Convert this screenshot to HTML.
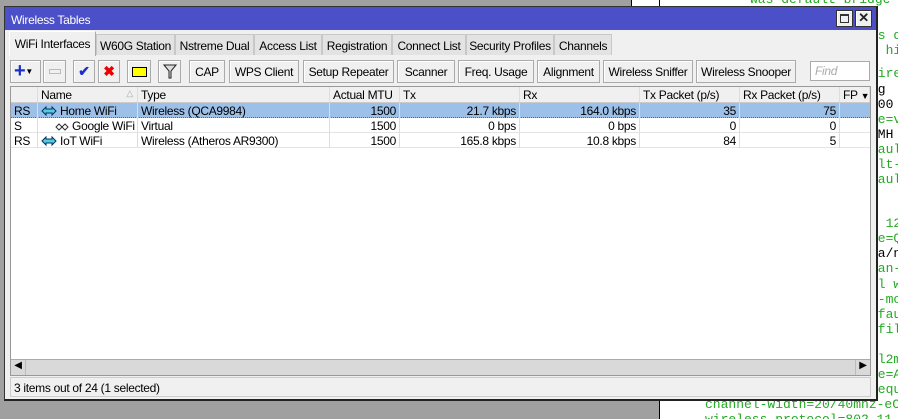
<!DOCTYPE html><html><head><style>
*{box-sizing:border-box;margin:0;padding:0}
html,body{overflow:hidden}
body{width:898px;height:419px;background:#a0a0a0;font-family:"Liberation Sans",sans-serif;font-size:12px;letter-spacing:-0.3px;color:#000;position:relative}
.term{position:absolute;left:659px;top:0;width:239px;height:419px;overflow:hidden;background:#fff;border-left:1px solid #000;font-family:"Liberation Mono",monospace;font-size:13px;letter-spacing:0;color:#2a2;white-space:pre;line-height:15px}
.termtop{position:absolute;left:631px;top:0;width:40px;height:8px;background:#fff;border-left:1px solid #000}
.term div{position:absolute;left:0}
.win{position:absolute;left:4px;top:6px;width:874px;height:395px;background:#f0f0f0;border:1px solid #333;border-right:2px solid #222;border-bottom:2px solid #222}
.title{position:absolute;left:0;top:0;right:0;height:23px;background:#4b4fc8;color:#fff;font-size:12px;padding:6px 0 0 6px}
.tb{position:absolute;top:3px;width:17px;height:17px;background:#f0f0f0;border:1px solid #333;box-shadow:inset 1px 1px #fff}
.tab{position:absolute;top:27px;height:21px;background:#e3e3e3;border:1px solid #c8c8c8;border-bottom:none;text-align:center;padding-top:4px;white-space:nowrap;overflow:hidden}
.tab.a{top:24px;height:25px;background:#f0f0f0;border-color:#fff #aaa #aaa #fff;padding-top:5px}
.btn{position:absolute;top:53px;height:23px;background:#f0f0f0;border:1px solid #aaa;text-align:center;padding-top:4px;box-shadow:inset 1px 1px #fff;white-space:nowrap;overflow:hidden}
.find{position:absolute;left:805px;top:54px;width:60px;height:20px;background:#fff;border:1px solid #aaa;color:#aaa;font-style:italic;padding:2px 4px}
.list{position:absolute;left:5px;top:79px;width:861px;height:290px;background:#fff;border:1px solid #999}
.hdr{position:absolute;left:0;top:0;height:16px;width:859px;background:#f0f0f0;border-bottom:1px solid #ccc}
.c{position:absolute;height:15px;padding:1px 3px 0;white-space:nowrap;overflow:hidden;border-right:1px solid #ddd}
.r{text-align:right}
.row{position:absolute;left:0;width:859px;height:15px;border-bottom:1px solid #e4e4e4}
.sel{background:#9cc0e8;border-bottom:1px dotted #666}
.hs{position:absolute;left:0;bottom:0;width:859px;height:16px;background:#d9d9d9;border-top:1px solid #aaa}
.status{position:absolute;left:5px;top:370px;width:861px;height:20px;border:1px solid #ccc;padding:3px 3px}
svg{vertical-align:-2px}
</style></head><body>
<div class="termtop"></div>
<div class="term">
<div style="top:-8px;left:90px">was-default-bridge none was</div>
<div style="top:28px;left:210px">es d</div>
<div style="top:43px;left:210px">  hi</div>
<div style="top:66px;left:210px">wire</div>
<div style="top:82px;left:210px;color:#000">ag</div>
<div style="top:97px;left:210px;color:#000">500</div>
<div style="top:112px;left:210px">pe=v</div>
<div style="top:127px;left:210px;color:#000">LMH</div>
<div style="top:142px;left:210px">faul</div>
<div style="top:157px;left:210px">ult-</div>
<div style="top:172px;left:210px">faul</div>
<div style="top:216px;left:210px">0 12</div>
<div style="top:231px;left:210px">pe=Q</div>
<div style="top:246px;left:210px;color:#000">-a/n</div>
<div style="top:261px;left:210px">can-</div>
<div style="top:277px;left:210px">el w</div>
<div style="top:292px;left:210px">e-mo</div>
<div style="top:307px;left:210px">efau</div>
<div style="top:322px;left:210px">ofil</div>
<div style="top:352px;left:210px"> l2m</div>
<div style="top:367px;left:210px">pe=A</div>
<div style="top:382px;left:210px">requ</div>
<div style="top:397px;left:45px">channel-width=20/40mhz-eC se</div>
<div style="top:412px;left:45px">wireless-protocol=802.11 vla</div>
</div>
<div class="win">
<div class="title">Wireless Tables
<div class="tb" style="right:23px"><div style="position:absolute;left:3px;top:3px;width:9px;height:9px;border:1px solid #333;border-top-width:2px"></div></div>
<div class="tb" style="right:4px;color:#222;font-weight:bold;font-size:13px;line-height:14px;text-align:center">✕</div>
</div>
<div class="tab a" style="left:4px;width:87px">WiFi Interfaces</div>
<div class="tab" style="left:91px;width:79px">W60G Station</div>
<div class="tab" style="left:170px;width:79px">Nstreme Dual</div>
<div class="tab" style="left:249px;width:68px">Access List</div>
<div class="tab" style="left:317px;width:70px">Registration</div>
<div class="tab" style="left:387px;width:74px">Connect List</div>
<div class="tab" style="left:461px;width:88px">Security Profiles</div>
<div class="tab" style="left:549px;width:58px">Channels</div>
<div class="btn" style="left:5px;width:31px;padding-top:1px;text-align:left;padding-left:3px"><span style="color:#1a2fd0;font-size:20px;font-weight:bold;line-height:18px">+</span><span style="font-size:8px;vertical-align:3px">▼</span></div>
<div class="btn" style="left:38px;width:23px"><div style="margin:4px auto;width:12px;height:5px;border:1px solid #bbb"></div></div>
<div class="btn" style="left:68px;width:22px;color:#1a2fd0;font-weight:bold;padding-top:2px;font-size:14px">✔</div>
<div class="btn" style="left:93px;width:22px;color:#e00;font-weight:bold;padding-top:2px;font-size:14px">✖</div>
<div class="btn" style="left:122px;width:24px"><div style="margin:2px auto;width:15px;height:10px;background:#ff0;border:1px solid #000"></div></div>
<div class="btn" style="left:153px;width:23px;padding-top:1px"><svg width="14" height="18" viewBox="0 0 14 18"><path d="M1 3h12l-5 6v7h-2v-7z" fill="#ddd" stroke="#222"/></svg></div>
<div class="btn" style="left:184px;width:36px">CAP</div>
<div class="btn" style="left:224px;width:70px">WPS Client</div>
<div class="btn" style="left:298px;width:91px">Setup Repeater</div>
<div class="btn" style="left:392px;width:58px">Scanner</div>
<div class="btn" style="left:453px;width:76px">Freq. Usage</div>
<div class="btn" style="left:532px;width:63px">Alignment</div>
<div class="btn" style="left:598px;width:90px">Wireless Sniffer</div>
<div class="btn" style="left:691px;width:100px">Wireless Snooper</div>
<div class="find">Find</div>
<div class="list">
<div class="hdr">
<div class="c" style="left:0;width:27px"></div>
<div class="c" style="left:27px;width:100px">Name<span style="position:absolute;right:4px;color:#aaa;font-size:9px">△</span></div>
<div class="c" style="left:127px;width:192px">Type</div>
<div class="c" style="left:319px;width:70px">Actual MTU</div>
<div class="c" style="left:389px;width:120px">Tx</div>
<div class="c" style="left:509px;width:120px">Rx</div>
<div class="c" style="left:629px;width:100px">Tx Packet (p/s)</div>
<div class="c" style="left:729px;width:100px">Rx Packet (p/s)</div>
<div class="c" style="left:829px;width:30px">FP <span style="font-size:9px">▼</span></div>
</div>
<div class="row sel" style="top:16px">
<div class="c" style="left:0;width:27px">RS</div>
<div class="c" style="left:27px;width:100px"><svg width="16" height="12" viewBox="0 0 16 12"><path d="M1 6l4-4v2h6v-2l4 4-4 4v-2h-6v2z" fill="#5cd" stroke="#036"/></svg> Home WiFi</div>
<div class="c" style="left:127px;width:192px">Wireless (QCA9984)</div>
<div class="c r" style="left:319px;width:70px">1500</div>
<div class="c r" style="left:389px;width:120px">21.7 kbps</div>
<div class="c r" style="left:509px;width:120px">164.0 kbps</div>
<div class="c r" style="left:629px;width:100px">35</div>
<div class="c r" style="left:729px;width:100px">75</div>
</div>
<div class="row" style="top:31px">
<div class="c" style="left:0;width:27px">S</div>
<div class="c" style="left:27px;width:100px;padding-left:17px"><svg width="14" height="10" viewBox="0 0 14 10"><path d="M1 5l3-3 3 3-3 3zM7 5l3-3 3 3-3 3z" fill="#fff" stroke="#333"/></svg> Google WiFi</div>
<div class="c" style="left:127px;width:192px">Virtual</div>
<div class="c r" style="left:319px;width:70px">1500</div>
<div class="c r" style="left:389px;width:120px">0 bps</div>
<div class="c r" style="left:509px;width:120px">0 bps</div>
<div class="c r" style="left:629px;width:100px">0</div>
<div class="c r" style="left:729px;width:100px">0</div>
</div>
<div class="row" style="top:46px">
<div class="c" style="left:0;width:27px">RS</div>
<div class="c" style="left:27px;width:100px"><svg width="16" height="12" viewBox="0 0 16 12"><path d="M1 6l4-4v2h6v-2l4 4-4 4v-2h-6v2z" fill="#5cd" stroke="#036"/></svg> IoT WiFi</div>
<div class="c" style="left:127px;width:192px">Wireless (Atheros AR9300)</div>
<div class="c r" style="left:319px;width:70px">1500</div>
<div class="c r" style="left:389px;width:120px">165.8 kbps</div>
<div class="c r" style="left:509px;width:120px">10.8 kbps</div>
<div class="c r" style="left:629px;width:100px">84</div>
<div class="c r" style="left:729px;width:100px">5</div>
</div>
<div class="hs"><div style="position:absolute;left:0;top:0;width:15px;height:15px;border-right:1px solid #bbb;font-size:10px;text-align:center">◀</div><div style="position:absolute;right:0;top:0;width:15px;height:15px;border-left:1px solid #bbb;font-size:10px;text-align:center">▶</div></div>
</div>
<div class="status">3 items out of 24 (1 selected)</div>
</div>
</body></html>
